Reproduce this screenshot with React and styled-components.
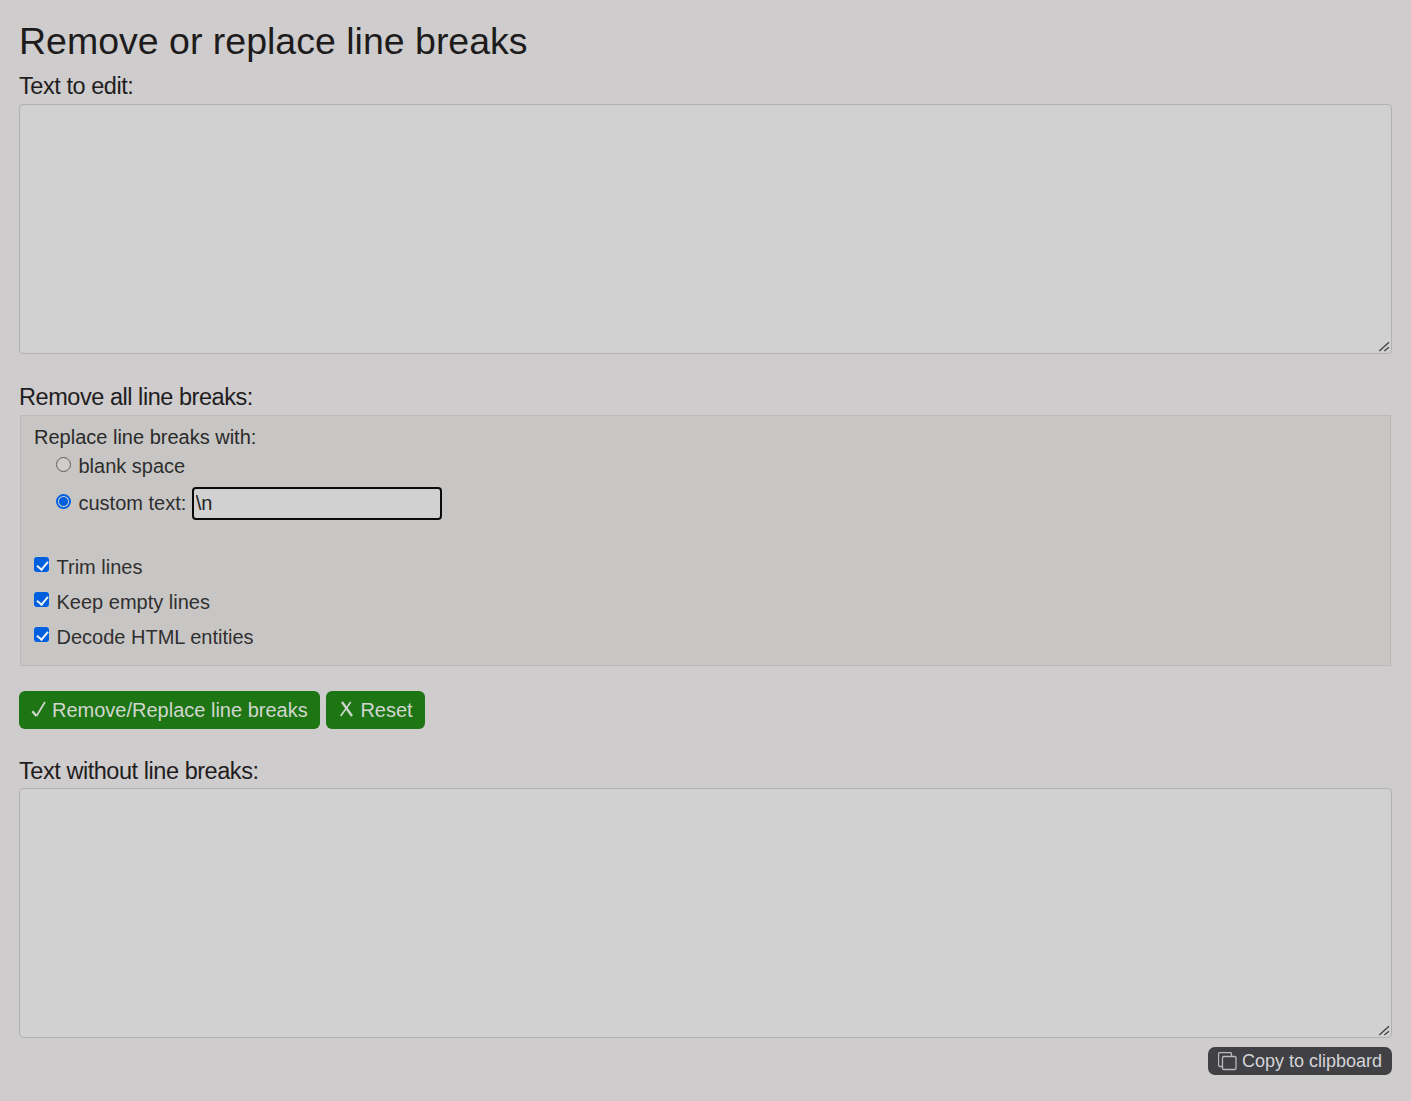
import React from "react";
import styled, { createGlobalStyle } from "styled-components";

const Global = createGlobalStyle`
  html, body { margin: 0; padding: 0; background: #cecccd; }
  body { font-family: "Liberation Sans", Arial, sans-serif; color: #212529; }
  * { box-sizing: border-box; }
`;

const Page = styled.main`
  width: 1411px;
  height: 1101px;
  padding: 0 19px;
  overflow: hidden;
`;

const Title = styled.h1`
  margin: 0;
  padding-top: 18px;
  height: 72px;
  font-size: 37.5px;
  line-height: 46px;
  font-weight: 400;
  color: #1d1b1b;
`;

const FieldLabel = styled.label`
  display: block;
  font-size: 23.5px;
  line-height: 28px;
  letter-spacing: -0.45px;
  color: #1f1d1e;
  height: ${(p) => p.$h}px;
`;

const resizer = encodeURIComponent(
  '<svg xmlns="http://www.w3.org/2000/svg" width="15" height="15"><path d="M3.3 13L13 4.3M8.3 13L13 9.3" stroke="#444" stroke-width="1.4" fill="none"/></svg>'
);

const Area = styled.textarea`
  display: block;
  width: 1373px;
  height: 250px;
  margin: 0;
  padding: 6px 12px;
  background: #d1d1d1;
  border: 1px solid #b3b1b0;
  border-radius: 4px;
  outline: none;
  font: 16px "Liberation Sans", sans-serif;
  resize: vertical;

  &::-webkit-resizer {
    background: url("data:image/svg+xml,${resizer}") no-repeat center;
  }
`;

const SectionGap = styled.div`
  height: 29px;
`;

const Options = styled.fieldset`
  margin: 0 0 0 1px;
  width: 1371px;
  height: 251px;
  padding: 9px 14px 0 13px;
  min-width: 0;
  background: #c8c6c4;
  border: 1px solid #bcbab8;
`;

const OptionHeading = styled.div`
  font-size: 20px;
  line-height: 25px;
  color: #2a2a2a;
`;

const RadioRow = styled.label`
  display: flex;
  align-items: center;
  gap: 7.5px;
  padding-left: 22px;
  height: ${(p) => p.$h}px;
  font-size: 20px;
  color: #2e2e2e;
`;

const Radio = styled.input`
  appearance: none;
  width: 15px;
  height: 15px;
  margin: -5px 0 0;
  border: 1.3px solid #5f5f5f;
  border-radius: 50%;
  background: #cfcdcb;

  &:checked {
    border: 2px solid #0060df;
    background: radial-gradient(circle, #0060df 0 4.2px, #d6d6d6 4.8px);
  }
`;

const CustomInput = styled.input`
  width: 250px;
  height: 33px;
  margin-left: -2px;
  padding: 0 2px;
  background: #d1d1d1;
  border: 2px solid #0a0a0a;
  border-radius: 4px;
  outline: none;
  font: 20px "Liberation Sans", sans-serif;
  color: #222;
`;

const CheckList = styled.div`
  margin-top: 26px;
`;

const CheckRow = styled.label`
  display: flex;
  align-items: center;
  gap: 7.5px;
  height: 35px;
  font-size: 20px;
  color: #303030;
`;

const Check = styled.input`
  appearance: none;
  position: relative;
  width: 15px;
  height: 15px;
  margin: -6px 0 0;
  background: #0060df;
  border-radius: 3px;

  &::after {
    content: "";
    position: absolute;
    left: 5px;
    top: 2px;
    width: 5px;
    height: 9px;
    border: solid #f2f4f8;
    border-width: 0 2.4px 2.4px 0;
    transform: rotate(40deg);
  }
`;

const ButtonRow = styled.div`
  display: flex;
  gap: 6px;
  margin-top: 25px;
  height: 66px;
`;

const ActionButton = styled.button`
  display: flex;
  align-items: center;
  height: 38px;
  padding: 0 12px;
  background: #1d7513;
  color: #d2d6d0;
  border: 0;
  border-radius: 6px;
  font: 20px "Liberation Sans", sans-serif;
  white-space: nowrap;
`;

const MarkIcon = styled.svg`
  flex: none;
  width: ${(p) => p.$w}px;
  height: 16px;
  margin-top: -2px;
  fill: none;
  stroke: #d2d6d0;
`;

const CopyRow = styled.div`
  display: flex;
  justify-content: flex-end;
  margin-top: 9px;
`;

const CopyButton = styled.button`
  display: flex;
  align-items: center;
  gap: 5px;
  height: 28px;
  width: 184px;
  padding: 0 0 0 10px;
  background: #404045;
  color: #d4d4d6;
  border: 0;
  border-radius: 7px;
  font: 18px "Liberation Sans", sans-serif;
  white-space: nowrap;
`;

const CopyIcon = () => (
  <svg width="19" height="19" viewBox="0 0 19 19" fill="none" stroke="#b9b9bb" strokeWidth="1.3">
    <path d="M4 14.5H1.8A1.3 1.3 0 0 1 .5 13.2V1.8A1.3 1.3 0 0 1 1.8 .5H12.2a1.3 1.3 0 0 1 1.3 1.3V4.5" />
    <rect x="4.5" y="4.5" width="13.5" height="13" rx="1.3" />
  </svg>
);

export default function App() {
  return (
    <Page>
      <Global />
      <Title>Remove or replace line breaks</Title>
      <FieldLabel htmlFor="input" $h={32}>Text to edit:</FieldLabel>
      <Area id="input" />
      <SectionGap />
      <FieldLabel $h={32}>Remove all line breaks:</FieldLabel>
      <Options>
        <OptionHeading>Replace line breaks with:</OptionHeading>
        <RadioRow $h={33}>
          <Radio type="radio" name="mode" /> blank space
        </RadioRow>
        <RadioRow $h={41}>
          <Radio type="radio" name="mode" defaultChecked /> custom text:
          <CustomInput defaultValue="\n" />
        </RadioRow>
        <CheckList>
          <CheckRow><Check type="checkbox" defaultChecked /> Trim lines</CheckRow>
          <CheckRow><Check type="checkbox" defaultChecked /> Keep empty lines</CheckRow>
          <CheckRow><Check type="checkbox" defaultChecked /> Decode HTML entities</CheckRow>
        </CheckList>
      </Options>
      <ButtonRow>
        <ActionButton>
          <MarkIcon $w={21} viewBox="0 0 21 16">
            <path d="M1.3 10.3L5.5 15" strokeWidth="2.3" />
            <path d="M5.5 15L14 1" strokeWidth="1.7" />
          </MarkIcon>
          Remove/Replace line breaks
        </ActionButton>
        <ActionButton>
          <MarkIcon $w={22.7} viewBox="0 0 22.7 16">
            <path d="M4 1L14 15" strokeWidth="2.3" />
            <path d="M2.7 15L12.7 1" strokeWidth="1.6" />
          </MarkIcon>
          Reset
        </ActionButton>
      </ButtonRow>
      <FieldLabel htmlFor="output" $h={31}>Text without line breaks:</FieldLabel>
      <Area id="output" />
      <CopyRow>
        <CopyButton><CopyIcon /> Copy to clipboard</CopyButton>
      </CopyRow>
    </Page>
  );
}
